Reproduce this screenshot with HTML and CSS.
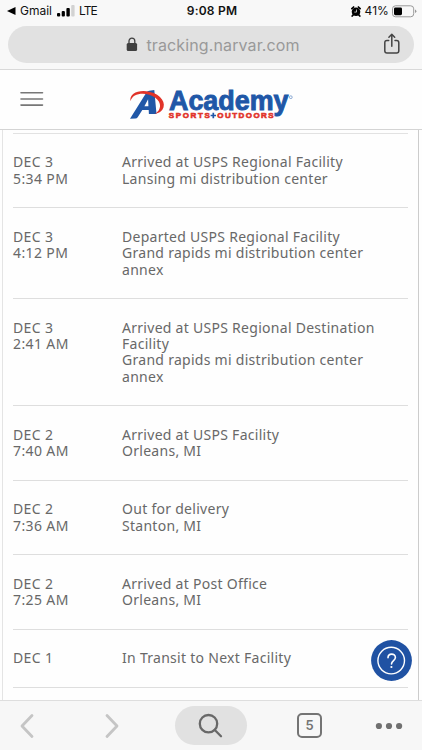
FILE: index.html
```html
<!DOCTYPE html>
<html lang="en">
<head>
<meta charset="utf-8">
<meta name="viewport" content="width=device-width, initial-scale=1">
<title>Academy Sports + Outdoors tracking</title>
<link rel="stylesheet" href="styles.css">
</head>
<body>
<div class="browser-top">
  <div class="status">
    <div class="status-left">
      <svg width="9" height="8" viewBox="0 0 9 8"><path d="M0 4 8.5 0v8z" fill="#000"/></svg>
      <span class="back-app">Gmail</span>
      <svg class="signal" width="18" height="12" viewBox="0 0 18 12"><rect x="0" y="8" width="3.2" height="3.6" rx="1"/><rect x="4.7" y="6" width="3.2" height="5.6" rx="1"/><rect x="9.4" y="3" width="3.4" height="8.6" rx="1"/><rect x="14.2" y="0" width="3.4" height="11.6" rx="1" fill="#d2d2d2"/></svg>
      <span class="carrier">LTE</span>
    </div>
    <div class="clock">9:08 PM</div>
    <div class="status-right">
      <svg width="10" height="11" viewBox="0 0 10 11"><circle cx="5" cy="5.8" r="4.3"/><path d="M.9 2.6 2.6 1M7.4 1l1.7 1.6M2.2 8.9 1.2 10M7.8 8.9l1 1.1" stroke="#000" stroke-width="1.7" stroke-linecap="round"/><path d="M5.5 3.5v2.6H3.3" fill="none" stroke="#f8f8f8" stroke-width=".7"/></svg>
      <span class="percent">41%</span>
      <svg width="25" height="13" viewBox="0 0 25 13"><rect x=".5" y=".8" width="21.2" height="11" rx="3" fill="none" stroke="#999"/><rect x="2" y="2.4" width="8" height="7.8" rx="1.4"/><path d="M23 4.5q1.4.5 1.4 1.8T23 8.1z" fill="#999"/></svg>
    </div>
  </div>
  <div class="address">
    <svg class="lock" width="12" height="15" viewBox="0 0 12 15"><rect x=".7" y="6" width="10.4" height="8" rx="1.5" fill="#404040"/><path d="M3 6.5V4a2.9 2.9 0 0 1 5.8 0v2.5" fill="none" stroke="#404040" stroke-width="1.3"/></svg>
    <span class="url">tracking.narvar.com</span>
    <svg class="share" width="18" height="22" viewBox="0 0 18 22" fill="none" stroke="#444" stroke-width="1.5" stroke-linecap="round" stroke-linejoin="round"><path d="M5.7 7.5H4Q1.8 7.5 1.8 9.7v8Q1.8 20 4 20h9.6q2.2 0 2.2-2.3v-8q0-2.2-2.2-2.2H12M8.8 13.2V1.5M5.9 4.2l2.9-2.9 2.9 2.9"/></svg>
  </div>
</div>
<header class="site-head">
  <svg class="menu" width="24" height="16" viewBox="0 0 24 16" stroke="#777" stroke-width="1.6" stroke-linecap="round"><path d="M1 1.8h21.5M1 8h21.5M1 14.1h21.5"/></svg>
  <svg class="logo" width="166" height="34" viewBox="0 0 166 34">
    <path fill-rule="evenodd" d="M0 28.7 16.6 2.2Q17.5.9 19.2.7L24.3 0l2.2 23.9h-7.6l-.2-3.8h-6.4l-4.6 7.1q-.8 1.3-2.3 1.4zM14.4 16.3h4l-.3-7z" fill="#2057a7"/>
    <path d="M.5 11.3C-1 3.5 8.7-.6 19.4 1.8 31.6 4.6 36.6 13.5 32.5 19.6 30.8 22 28 23.6 24.8 23.9 31.5 20 32 12.8 25.3 7.8 17 1.8 2.6 2.4.5 11.3z" fill="#e13329"/>
    <text class="logo-name" x="39" y="20.4" textLength="119.5" lengthAdjust="spacingAndGlyphs">Academy</text>
    <text class="logo-sub" x="38.8" y="28.4" textLength="41" lengthAdjust="spacing">SPORTS</text>
    <path d="M80.6 25.5H86M83.3 22.8v5.4" stroke="#2057a7" stroke-width="1.7"/>
    <text class="logo-sub" x="87.2" y="28.4" textLength="56.5" lengthAdjust="spacing">OUTDOORS</text>
    <circle cx="160.8" cy="7.2" r="1.4" fill="none" stroke="#7297c9" stroke-width=".8"/>
  </svg>
</header>
<main class="page">
  <section class="events">
    <article class="event"><div class="when">DEC 3<br>5:34 PM</div><div class="what">Arrived at USPS Regional Facility<br>Lansing mi distribution center</div></article>
    <article class="event"><div class="when">DEC 3<br>4:12 PM</div><div class="what">Departed USPS Regional Facility<br>Grand rapids mi distribution center<br>annex</div></article>
    <article class="event"><div class="when">DEC 3<br>2:41 AM</div><div class="what">Arrived at USPS Regional Destination<br>Facility<br>Grand rapids mi distribution center<br>annex</div></article>
    <article class="event"><div class="when">DEC 2<br>7:40 AM</div><div class="what">Arrived at USPS Facility<br>Orleans, MI</div></article>
    <article class="event"><div class="when">DEC 2<br>7:36 AM</div><div class="what">Out for delivery<br>Stanton, MI</div></article>
    <article class="event"><div class="when">DEC 2<br>7:25 AM</div><div class="what">Arrived at Post Office<br>Orleans, MI</div></article>
    <article class="event"><div class="when">DEC 1</div><div class="what">In Transit to Next Facility</div></article>
  </section>
  <div class="help">
    <svg width="41" height="41" viewBox="0 0 41 41"><circle cx="20.5" cy="20.5" r="20.4" fill="#2052a3"/><circle cx="20.2" cy="20.6" r="13.3" fill="none" stroke="#fff" stroke-width="1.4"/><path d="M17 17.8c0-5 7.4-4.8 7.4-.3 0 3-3.9 3.1-3.9 6.4" fill="none" stroke="#fff" stroke-width="1.6" stroke-linecap="round"/><circle cx="20.4" cy="27" r="1.1" fill="#fff"/></svg>
  </div>
</main>
<nav class="toolbar">
  <svg width="14" height="26" viewBox="0 0 14 26"><path d="M12 2.5 2 13l10 10.5" class="arrow"/></svg>
  <svg width="14" height="26" viewBox="0 0 14 26"><path d="M2 2.5 12 13 2 23.5" class="arrow"/></svg>
  <div class="search"><svg width="26" height="26" viewBox="0 0 26 26" fill="none" stroke="#686868" stroke-width="2.3" stroke-linecap="round"><circle cx="10.5" cy="10.7" r="8.7"/><path d="m16.8 17 6.2 6.2"/></svg></div>
  <div class="tabs">5</div>
  <svg width="28" height="8" viewBox="0 0 28 8" fill="#707070"><circle cx="3.9" cy="4" r="3.1"/><circle cx="14" cy="4" r="3.1"/><circle cx="24.1" cy="4" r="3.1"/></svg>
</nav>
</body>
</html>
```
FILE: styles.css
```css
* { box-sizing: border-box; }
body {
  margin: 0;
  width: 422px;
  height: 750px;
  overflow: hidden;
  display: flex;
  flex-direction: column;
  background: #fefefe;
  font-family: "Noto Sans", sans-serif;
}
svg { display: block; flex: none; }
.browser-top {
  height: 70px;
  flex: none;
  background: #f8f8f8;
  border-bottom: 1px solid #d9d9d9;
}
.status {
  height: 26px;
  padding: 0 5px 4px 7px;
  display: grid;
  grid-template-columns: 1fr auto 1fr;
  align-items: center;
  font: 12px/18px Inter, sans-serif;
  color: #111;
}
.status-left, .status-right { display: flex; align-items: center; }
.status-right { justify-content: flex-end; gap: 4px; }
.back-app { margin-left: 4px; width: 32px; white-space: nowrap; }
.signal { margin: 0 4px 0 5px; }
.carrier { letter-spacing: -.9px; }
.clock { font-weight: 600; letter-spacing: .2px; }
.percent { letter-spacing: .1px; margin-right: -1px; }
.address {
  height: 37px;
  margin: 0 8px;
  padding: 0 13px 0 118px;
  border-radius: 19px;
  background: #e1e1e1;
  display: flex;
  align-items: center;
}
.url {
  margin-left: 8.5px;
  font: 16px/20px Inter, sans-serif;
  letter-spacing: .12px;
  color: #999;
  white-space: nowrap;
}
.share { margin: -2px 0 0 auto; }
.site-head {
  height: 60px;
  flex: none;
  display: flex;
  align-items: flex-start;
  padding: 20px 0 0 20px;
  border-bottom: 1px solid #d4d4d4;
}
.menu { margin-top: 1px; }
.logo { margin-left: 85.5px; overflow: visible; }
.logo-name { font: 700 27px "Liberation Sans", sans-serif; fill: #2057a7; stroke: #2057a7; stroke-width: .9px; }
.logo-sub { font: 700 8px "Liberation Sans", sans-serif; fill: #e13329; stroke: #e13329; stroke-width: .6px; }
.page {
  flex: 1;
  min-height: 0;
  position: relative;
  margin: 0 3px 0 2px;
  border-left: 1px solid #e4e4e4;
  border-right: 1px solid #ccc;
  padding: 3px 10px 0;
}
.events { border-top: 1px solid #e2e2e2; }
.event {
  display: flex;
  padding: 20.4px 0 20.4px;
  border-bottom: 1px solid #dedede;
  font-size: 14px;
  line-height: 16.35px;
  letter-spacing: .28px;
  color: #686868;
}
.when { width: 109px; flex: none; letter-spacing: .38px; }
.what { white-space: nowrap; }
.help { position: absolute; right: 6px; bottom: 19px; }
.toolbar {
  height: 50px;
  flex: none;
  background: #f7f7f7;
  border-top: 1px solid #dedede;
  display: flex;
  align-items: center;
  padding: 0 19px 0 20px;
}
.arrow { fill: none; stroke: #c5c5c5; stroke-width: 2.8; stroke-linecap: round; stroke-linejoin: round; }
.toolbar > :nth-child(2) { margin-left: 71px; }
.search {
  width: 72px;
  height: 39px;
  margin-left: 56px;
  border-radius: 20px;
  background: #e1e1e1;
  display: flex;
  align-items: center;
  justify-content: center;
}
.tabs {
  width: 25px;
  height: 25px;
  margin: 0 auto 0 50px;
  border: 2px solid #747474;
  border-radius: 5px;
  color: #747474;
  text-align: center;
  font: 600 13px/21px Inter, sans-serif;
}
```
